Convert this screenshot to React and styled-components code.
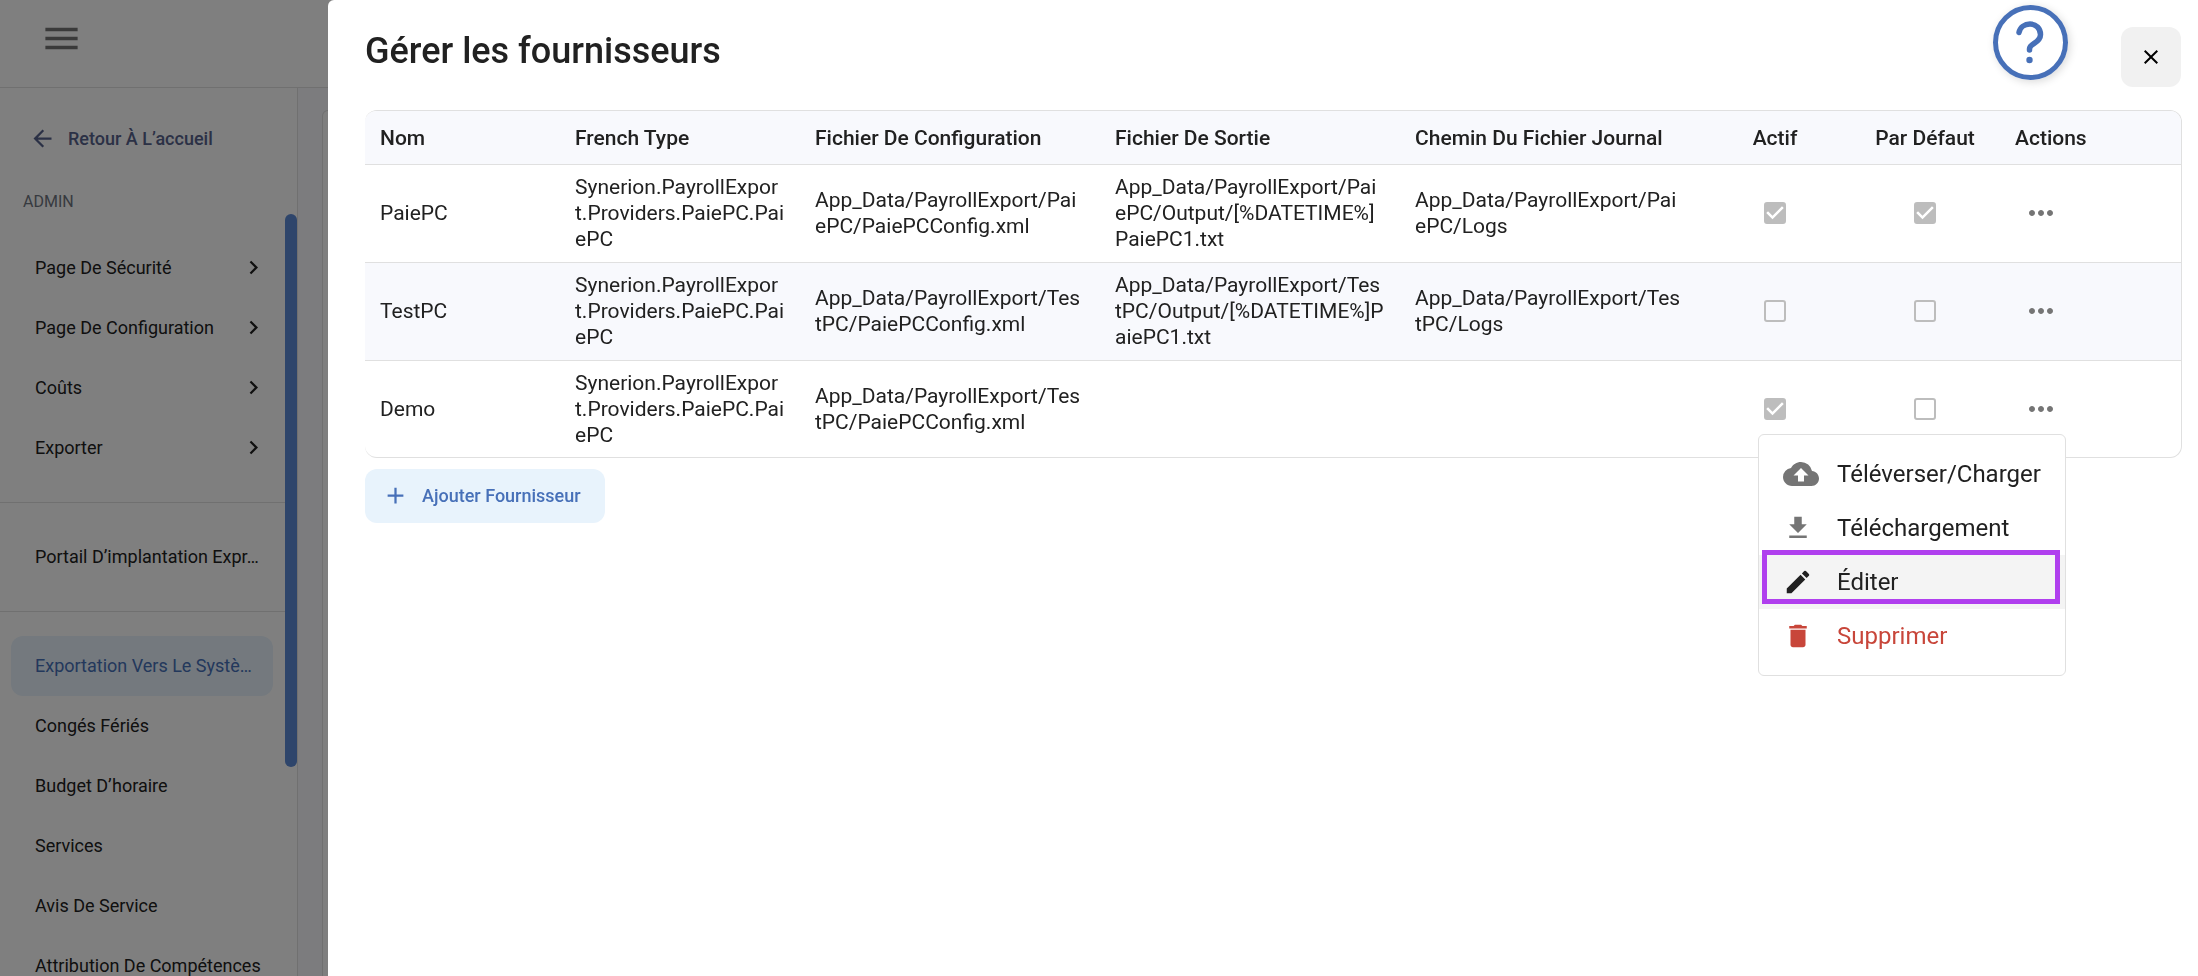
import React from "react";
import styled, { createGlobalStyle, css } from "styled-components";
import {
  MdAdd,
  MdArrowBack,
  MdChevronRight,
  MdClose,
  MdCloudUpload,
  MdCreate,
  MdDelete,
  MdFileDownload,
  MdMenu,
  MdMoreHoriz,
} from "react-icons/md";

const color = {
  text: "#212121",
  muted: "#757575",
  line: "#e0e0e0",
  tint: "#f8f9fd",
  primary: "#4770b8",
  primarySoft: "#e8f3fc",
  danger: "#c8463a",
  marker: "#b03fee",
};

const GlobalStyle = createGlobalStyle`
  *, *::before, *::after { box-sizing: border-box; }
  body {
    margin: 0;
    background: #fff;
    color: ${color.text};
    font-family: Roboto, "Liberation Sans", sans-serif;
    font-size: 18px;
  }
  button { font: inherit; color: inherit; border: 0; background: none; padding: 0; cursor: pointer; }
  svg { display: block; flex-shrink: 0; }
`;

const Page = styled.div`
  display: flex;
  flex-direction: column;
  height: 100vh;
  overflow: hidden;
`;

const TopBar = styled.header`
  display: flex;
  align-items: center;
  height: 88px;
  padding: 0 40px 10px;
  border-bottom: 1px solid ${color.line};
  color: ${color.muted};
`;

const Columns = styled.div`
  display: flex;
  flex: 1;
  min-height: 0;
`;

const Sidebar = styled.aside`
  display: flex;
  flex-direction: column;
  width: 298px;
  border-right: 1px solid ${color.line};
`;

const BackLink = styled.a`
  display: flex;
  align-items: center;
  gap: 12px;
  height: 60px;
  margin-top: 20px;
  padding-left: 29px;
  color: #57628c;
  font-weight: 500;
  text-decoration: none;
`;

const SectionLabel = styled.h2`
  margin: 22px 0 0;
  padding-left: 23px;
  height: 24px;
  line-height: 24px;
  font-size: 16px;
  font-weight: 400;
  color: #6f7580;
`;

const NavArea = styled.div`
  display: flex;
  flex: 1;
  min-height: 0;
  overflow: hidden;
`;

const Nav = styled.nav`
  flex: 1;
  min-width: 0;
`;

const ScrollThumb = styled.div`
  width: 12px;
  height: 553px;
  border-radius: 6px;
  background: #5c8ad6;
`;

const NavGroup = styled.ul`
  list-style: none;
  margin: 0;
  padding: 24px 12px 24px 11px;
  border-bottom: 1px solid ${color.line};
`;

const NavLink = styled.a`
  display: flex;
  align-items: center;
  justify-content: space-between;
  height: 60px;
  padding: 0 6px 2px 24px;
  border-radius: 12px;
  color: ${color.text};
  text-decoration: none;
  white-space: nowrap;
  ${(p) =>
    p.$active &&
    css`
      background: ${color.primarySoft};
      color: ${color.primary};
    `}
`;

const Content = styled.main`
  flex: 1;
  padding: 22px 24px 0;
  background: ${color.tint};
`;

const ContentCard = styled.div`
  height: 100%;
  border: 1px solid ${color.line};
  border-bottom: 0;
  border-radius: 6px 6px 0 0;
  background: #fff;
`;

const Backdrop = styled.div`
  position: fixed;
  inset: 0;
  padding-left: 328px;
  background: rgba(0, 0, 0, 0.5);
`;

const Drawer = styled.section`
  height: 100%;
  padding: 5px 16px 0 37px;
  border-radius: 6px 0 0 0;
  background: #fff;
  overflow: auto;
`;

const DrawerHeader = styled.div`
  display: flex;
  align-items: flex-start;
  height: 105px;
`;

const Title = styled.h1`
  flex: 1;
  margin: 25px 0 0;
  font-size: 36px;
  line-height: 42px;
  font-weight: 500;
`;

const HelpButton = styled.button`
  width: 75px;
  height: 75px;
  margin-right: 53px;
  border-radius: 50%;
  box-shadow: 2px 2px 8px rgba(0, 0, 0, 0.15);
`;

const CloseButton = styled.button`
  display: flex;
  align-items: center;
  justify-content: center;
  width: 60px;
  height: 60px;
  margin: 22px 1px 0 0;
  border-radius: 12px;
  background: #f1f1f1;
  color: #000;
`;

const TableArea = styled.div`
  position: relative;
`;

const TableFrame = styled.div`
  border: 1px solid ${color.line};
  border-left: 0;
  border-radius: 12px;
  overflow: hidden;
`;

const Table = styled.table`
  width: 100%;
  table-layout: fixed;
  border-collapse: separate;
  border-spacing: 0;
  font-size: 21px;
  line-height: 26px;
`;

const Th = styled.th`
  height: 54px;
  padding: 0 15px;
  border-bottom: 1px solid ${color.line};
  background: ${color.tint};
  font-weight: 500;
  text-align: ${(p) => (p.$center ? "center" : "left")};
  white-space: nowrap;
`;

const Td = styled.td`
  height: 98px;
  padding: 0 15px 2px;
  border-bottom: 1px solid ${color.line};
  text-align: left;
  word-break: break-all;
`;

const Row = styled.tr`
  &:nth-child(even) ${Td} {
    background: ${color.tint};
  }
  &:last-child ${Td} {
    height: 96px;
    padding-bottom: 0;
    border-bottom: 0;
  }
`;

const CheckWrap = styled.span`
  display: grid;
  place-items: center;
  > * {
    grid-area: 1 / 1;
  }
  svg {
    pointer-events: none;
  }
`;

const CheckInput = styled.input`
  appearance: none;
  width: 22px;
  height: 22px;
  margin: 0;
  border: 2px solid #bdbdbd;
  border-radius: 3px;
  &:checked {
    background: #bdbdbd;
  }
`;

const MoreButton = styled.button`
  display: block;
  padding: 0 8px;
  color: ${color.muted};
`;

const AddButton = styled.button`
  display: flex;
  align-items: center;
  gap: 13px;
  height: 54px;
  margin-top: 11px;
  padding: 0 24px 1px 17px;
  border-radius: 12px;
  background: ${color.primarySoft};
  color: ${color.primary};
  font-weight: 500;
`;

const Menu = styled.div`
  position: absolute;
  top: 324px;
  left: 1393px;
  width: 308px;
  padding: 12px 0;
  border: 1px solid ${color.line};
  border-radius: 6px;
  background: #fff;
`;

const MenuItem = styled.button`
  position: relative;
  display: flex;
  align-items: center;
  gap: 18px;
  width: 100%;
  height: 54px;
  padding: 0 24px;
  font-size: 24px;
  text-align: left;
  white-space: nowrap;
  color: ${(p) => (p.$danger ? color.danger : color.text)};
  background: ${(p) => (p.$active ? "#f4f4f4" : "transparent")};
`;

const MenuIcon = styled.span`
  width: 36px;
  color: ${(p) => (p.$inherit ? "inherit" : color.muted)};
`;

const Marker = styled.span`
  position: absolute;
  inset: -5px 5px 5px 3px;
  border: 5px solid ${color.marker};
`;

const navGroups = [
  [
    { label: "Page De Sécurité", nested: true },
    { label: "Page De Configuration", nested: true },
    { label: "Coûts", nested: true },
    { label: "Exporter", nested: true },
  ],
  [{ label: "Portail D’implantation Expr…" }],
  [
    { label: "Exportation Vers Le Systè…", active: true },
    { label: "Congés Fériés" },
    { label: "Budget D’horaire" },
    { label: "Services" },
    { label: "Avis De Service" },
    { label: "Attribution De Compétences" },
  ],
];

const columns = [
  { label: "Nom", width: 195 },
  { label: "French Type", width: 240 },
  { label: "Fichier De Configuration", width: 300 },
  { label: "Fichier De Sortie", width: 300 },
  { label: "Chemin Du Fichier Journal", width: 300 },
  { label: "Actif", width: 150, center: true },
  { label: "Par Défaut", width: 150, center: true },
  { label: "Actions" },
];

const providers = [
  {
    name: "PaiePC",
    type: "Synerion.PayrollExport.Providers.PaiePC.PaiePC",
    config: "App_Data/PayrollExport/PaiePC/PaiePCConfig.xml",
    output: "App_Data/PayrollExport/PaiePC/Output/[%DATETIME%]PaiePC1.txt",
    log: "App_Data/PayrollExport/PaiePC/Logs",
    enabled: true,
    isDefault: true,
  },
  {
    name: "TestPC",
    type: "Synerion.PayrollExport.Providers.PaiePC.PaiePC",
    config: "App_Data/PayrollExport/TestPC/PaiePCConfig.xml",
    output: "App_Data/PayrollExport/TestPC/Output/[%DATETIME%]PaiePC1.txt",
    log: "App_Data/PayrollExport/TestPC/Logs",
    enabled: false,
    isDefault: false,
  },
  {
    name: "Demo",
    type: "Synerion.PayrollExport.Providers.PaiePC.PaiePC",
    config: "App_Data/PayrollExport/TestPC/PaiePCConfig.xml",
    output: "",
    log: "",
    enabled: true,
    isDefault: false,
  },
];

function Check({ label, checked }) {
  return (
    <CheckWrap>
      <CheckInput type="checkbox" aria-label={label} checked={checked} readOnly />
      {checked && (
        <svg width="30" height="30" viewBox="0 0 24 24" fill="#fff" aria-hidden="true">
          <path d="M10 17l-5-5 1.41-1.41L10 14.17l7.59-7.59L19 8z" />
        </svg>
      )}
    </CheckWrap>
  );
}

function HelpIcon() {
  return (
    <svg width="75" height="75" viewBox="0 0 75 75" fill="none" aria-hidden="true">
      <circle cx="37.5" cy="37.5" r="35" fill="#fff" stroke={color.primary} strokeWidth="5" />
      <path
        d="M26 27.5C27 22.5 31.5 19 37 19C43 19 47.5 23.5 47.5 29.5C47.5 38.5 36.5 38 36.5 44V45"
        stroke={color.primary}
        strokeWidth="5.5"
        strokeLinecap="round"
      />
      <circle cx="36.5" cy="55" r="3.2" fill={color.primary} />
    </svg>
  );
}

function ProviderMenu() {
  return (
    <Menu role="menu">
      <MenuItem role="menuitem">
        <MenuIcon><MdCloudUpload size={36} /></MenuIcon>
        Téléverser/Charger
      </MenuItem>
      <MenuItem role="menuitem">
        <MenuIcon><MdFileDownload size={30} /></MenuIcon>
        Téléchargement
      </MenuItem>
      <MenuItem role="menuitem" $active>
        <MenuIcon $inherit><MdCreate size={30} /></MenuIcon>
        Éditer
        <Marker />
      </MenuItem>
      <MenuItem role="menuitem" $danger>
        <MenuIcon $inherit><MdDelete size={30} /></MenuIcon>
        Supprimer
      </MenuItem>
    </Menu>
  );
}

export default function App() {
  return (
    <>
      <GlobalStyle />
      <Page>
        <TopBar>
          <button aria-label="Menu"><MdMenu size={43} /></button>
        </TopBar>
        <Columns>
          <Sidebar>
            <BackLink href="#accueil">
              <MdArrowBack size={27} />
              Retour À L’accueil
            </BackLink>
            <SectionLabel>ADMIN</SectionLabel>
            <NavArea>
              <Nav>
                {navGroups.map((group, i) => (
                  <NavGroup key={i}>
                    {group.map((item) => (
                      <li key={item.label}>
                        <NavLink href="#page" $active={item.active}>
                          {item.label}
                          {item.nested && <MdChevronRight size={27} />}
                        </NavLink>
                      </li>
                    ))}
                  </NavGroup>
                ))}
              </Nav>
              <ScrollThumb />
            </NavArea>
          </Sidebar>
          <Content>
            <ContentCard />
          </Content>
        </Columns>
      </Page>

      <Backdrop>
        <Drawer role="dialog" aria-labelledby="drawer-title">
          <DrawerHeader>
            <Title id="drawer-title">Gérer les fournisseurs</Title>
            <HelpButton aria-label="Aide"><HelpIcon /></HelpButton>
            <CloseButton aria-label="Fermer"><MdClose size={24} /></CloseButton>
          </DrawerHeader>
          <TableArea>
            <TableFrame>
              <Table>
                <colgroup>
                  {columns.map((c) => (
                    <col key={c.label} width={c.width} />
                  ))}
                </colgroup>
                <thead>
                  <tr>
                    {columns.map((c) => (
                      <Th key={c.label} scope="col" $center={c.center}>{c.label}</Th>
                    ))}
                  </tr>
                </thead>
                <tbody>
                  {providers.map((p) => (
                    <Row key={p.name}>
                      <Td>{p.name}</Td>
                      <Td>{p.type}</Td>
                      <Td>{p.config}</Td>
                      <Td>{p.output}</Td>
                      <Td>{p.log}</Td>
                      <Td><Check label={`Actif ${p.name}`} checked={p.enabled} /></Td>
                      <Td><Check label={`Par défaut ${p.name}`} checked={p.isDefault} /></Td>
                      <Td>
                        <MoreButton aria-label={`Actions ${p.name}`}>
                          <MdMoreHoriz size={36} />
                        </MoreButton>
                      </Td>
                    </Row>
                  ))}
                </tbody>
              </Table>
            </TableFrame>
            <ProviderMenu />
          </TableArea>
          <AddButton>
            <MdAdd size={27} />
            Ajouter Fournisseur
          </AddButton>
        </Drawer>
      </Backdrop>
    </>
  );
}
